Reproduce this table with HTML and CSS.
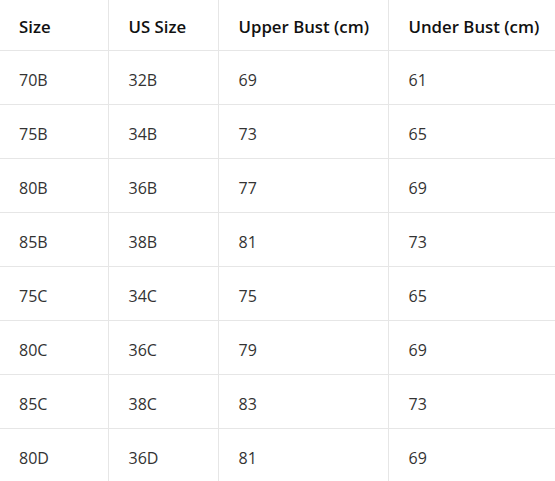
FILE: index.html
```html
<!DOCTYPE html>
<html>
<head>
<meta charset="utf-8">
<link rel="stylesheet" href="styles.css">
</head>
<body>
<table class="size-table">
  <colgroup>
    <col class="c1"><col class="c2"><col class="c3"><col class="c4">
  </colgroup>
  <thead>
    <tr><th>Size</th><th>US Size</th><th>Upper Bust (cm)</th><th>Under Bust (cm)</th></tr>
  </thead>
  <tbody>
    <tr><td>70B</td><td>32B</td><td>69</td><td>61</td></tr>
    <tr><td>75B</td><td>34B</td><td>73</td><td>65</td></tr>
    <tr><td>80B</td><td>36B</td><td>77</td><td>69</td></tr>
    <tr><td>85B</td><td>38B</td><td>81</td><td>73</td></tr>
    <tr><td>75C</td><td>34C</td><td>75</td><td>65</td></tr>
    <tr><td>80C</td><td>36C</td><td>79</td><td>69</td></tr>
    <tr><td>85C</td><td>38C</td><td>83</td><td>73</td></tr>
    <tr><td>80D</td><td>36D</td><td>81</td><td>69</td></tr>
  </tbody>
</table>
</body>
</html>
```
FILE: styles.css
```css
html, body {
  margin: 0;
  padding: 0;
  background: #ffffff;
}
body {
  font-family: "Open Sans", "Noto Sans", sans-serif;
  overflow: hidden;
}
.size-table {
  border-collapse: collapse;
  table-layout: fixed;
  width: 555px;
}
.c1 { width: 108px; }
.c2 { width: 110px; }
.c3 { width: 170px; }
.c4 { width: 167px; }
.size-table th,
.size-table td {
  text-align: left;
  border-right: 1px solid #e6e6e6;
  border-bottom: 1px solid #e6e6e6;
  white-space: nowrap;
  vertical-align: middle;
}
.size-table th:last-child,
.size-table td:last-child {
  border-right: none;
}
.size-table th {
  height: 48px;
  padding: 2px 0 0 20px;
  font-size: 16.8px;
  font-weight: 600;
  color: #111111;
}
.size-table td {
  height: 49px;
  padding: 4px 0 0 20px;
  font-size: 16px;
  font-weight: 400;
  color: #333333;
}
.size-table th:first-child,
.size-table td:first-child {
  padding-left: 19px;
}
```
